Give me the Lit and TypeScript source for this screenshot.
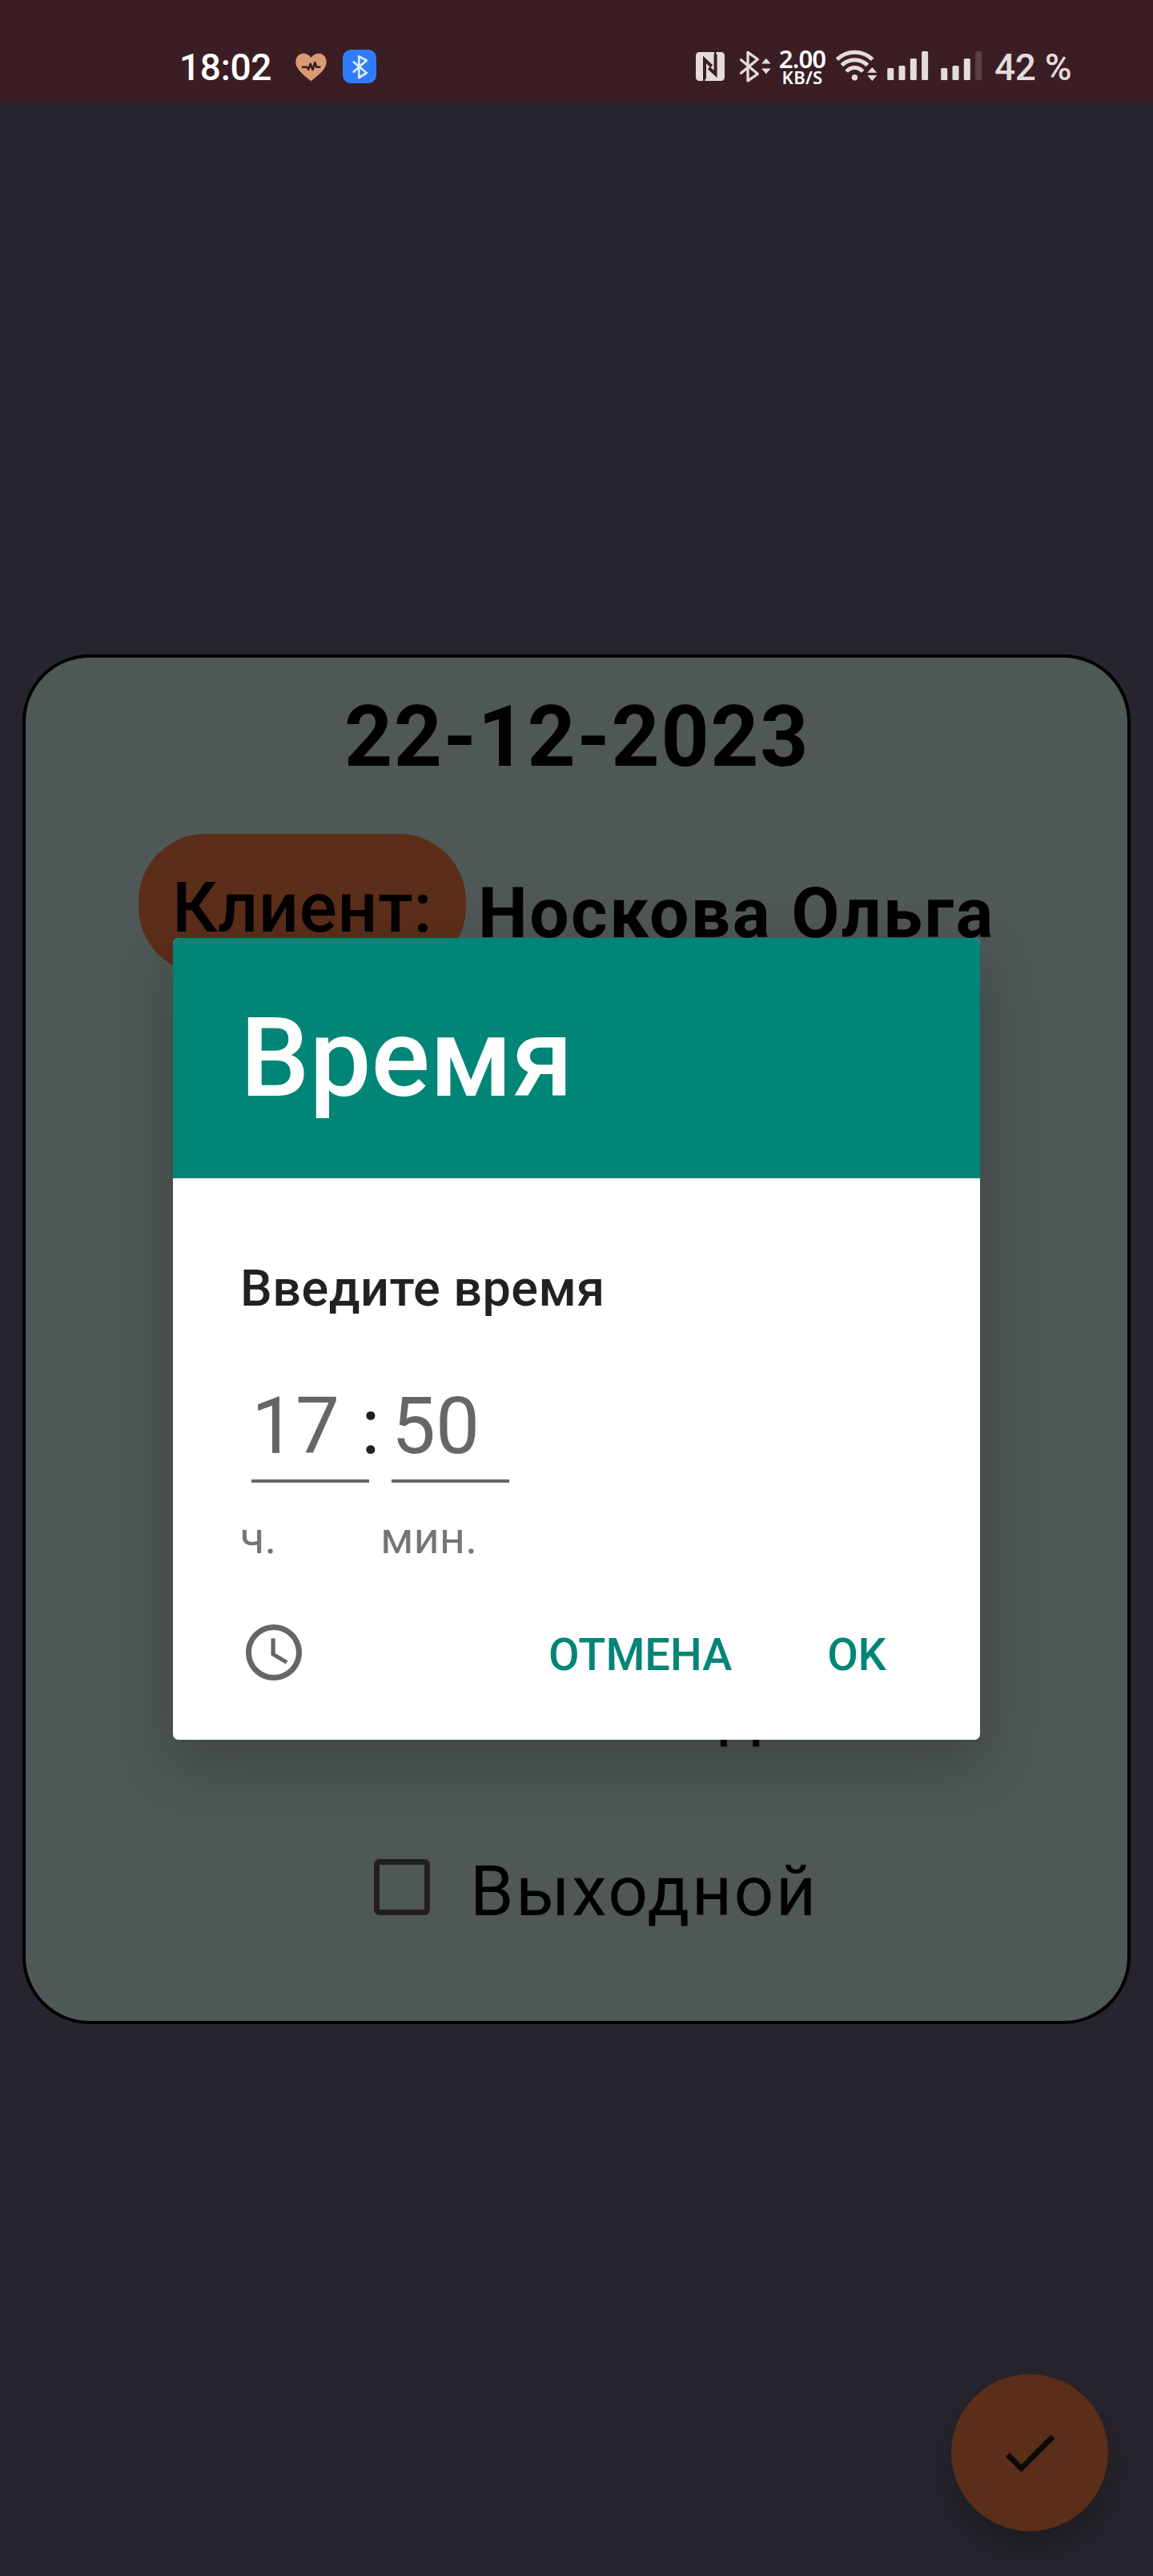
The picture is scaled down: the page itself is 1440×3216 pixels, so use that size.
import { LitElement, html, css, svg } from "lit";
import { customElement, property } from "lit/decorators.js";

/** Icons of the status bar share one 60px tall strip, so their boxes align in the row. */
@customElement("status-bar")
export class StatusBar extends LitElement {
  static styles = css`
    :host {
      display: flex;
      align-items: center;
      box-sizing: border-box;
      height: 128px;
      padding: 36px 0 0 224px;
      background: #3b1e24;
      color: #e3dbdc;
      font-family: Roboto, sans-serif;
    }
    svg { display: block; flex: none; height: 60px; fill: currentColor; }
    .text {
      padding-top: 4px;
      font-size: 46px;
      font-weight: 500;
      line-height: 60px;
      letter-spacing: -0.3px;
      white-space: nowrap;
      flex: none;
    }
    .clock { width: 117px; color: #fff; }
    .battery { margin-left: 15px; }
    .heart { width: 39px; margin-left: 28px; color: #da9a72; }
    .tile { width: 42px; margin-left: 20px; }
    .nfc { width: 36px; margin-left: 399px; }
    .bt { width: 43px; margin-left: 17px; }
    .wifi { width: 54px; margin-left: 9px; }
    .sim { width: 53px; margin-left: 11px; }
    .sim + .sim { margin-left: 14px; }
    .speed {
      flex: none;
      width: 62px;
      margin-left: 6px;
      color: #fff;
      text-align: center;
      font-family: "Noto Sans", sans-serif;
      font-weight: 600;
      white-space: nowrap;
    }
    .rate { font-size: 31px; line-height: 28px; letter-spacing: -0.8px; }
    .unit { font-size: 22px; line-height: 19px; letter-spacing: 0.3px; }
    .line { fill: none; stroke: currentColor; stroke-linejoin: round; stroke-linecap: round; }
    .cut { fill: none; stroke: #3b1e24; }
    .faded { opacity: 0.18; }
  `;

  private bars(x: number, active: number) {
    const heights = [15, 18, 27, 36];
    return heights.map(
      (h, i) => svg`<rect class=${i < active ? "" : "faded"} x=${x + i * 14.3} y=${100 - h} width="8" height=${h} rx="1.5"/>`
    );
  }

  render() {
    return html`
      <div class="text clock">18:02</div>
      <svg class="heart" viewBox="369 52 39 60">
        <path d="M388.5 101.2C383.5 96.500 369.300 88 369.300 77C369.300 71 373.500 66.700 379 66.700C383 66.700 386.500 69 388.500 72C390.500 69 394 66.700 398 66.700C403.500 66.700 407.700 71 407.700 77C407.700 88 393.500 96.500 388.500 101.200Z"/>
        <path class="cut" stroke-width="2.6" stroke-linecap="round" stroke-linejoin="round" d="M378 83.700H383L385.300 86.500L387.700 79.800L390.600 87L393.300 78L395.300 83.700H399.300"/>
      </svg>
      <svg class="tile" viewBox="428 52 42 60">
        <rect x="428" y="62" width="42" height="42" rx="10" fill="#2f7cfd"/>
        <path fill="none" stroke="#dfe9ff" stroke-width="2.800" stroke-linejoin="round" stroke-linecap="round" d="M441.800 77.500L457.800 91L448.300 97V70.500L457.800 75.500L441.800 89.500"/>
      </svg>
      <svg class="nfc" viewBox="869 52 36 60">
        <rect x="869" y="65" width="36" height="36" rx="4.500"/>
        <path class="cut" stroke-width="4" d="M880 98.500V74.500L888.800 82.800M893.600 68V92.500L885.200 84.800"/>
        <path class="cut" stroke-width="2.500" d="M879.300 98V102M893.200 64V70"/>
      </svg>
      <svg class="bt" viewBox="922 52 43 60">
        <path class="line" stroke-width="3.300" d="M925.500 74.800L946.300 92.300L934 100.800V65.300L946.300 74L925.500 91.300"/>
        <path d="M951 79.500L956.800 72.800L962.700 79.500ZM951 85.500H962.700L956.800 92.300Z"/>
      </svg>
      <div class="speed">
        <div class="rate">2.00</div>
        <div class="unit">KB/S</div>
      </div>
      <svg class="wifi" viewBox="1042 52 54 60">
        <g fill="none" stroke="currentColor" stroke-width="5">
          <path d="M1045.300 74.300A32 32 0 0 1 1089.700 74.300"/>
          <path d="M1051.300 81.500A22.300 22.300 0 0 1 1083.400 81.500"/>
          <path d="M1057.200 89.300A13 13 0 0 1 1077.500 89.300"/>
        </g>
        <circle cx="1067.400" cy="96.700" r="3.700"/>
        <path d="M1083.300 90.700L1089.300 84L1095.300 90.700ZM1083.300 94H1095.300L1089.300 101Z"/>
      </svg>
      <svg class="sim" viewBox="1107 52 53 60">${this.bars(1108.2, 4)}</svg>
      <svg class="sim" viewBox="1174 52 53 60">${this.bars(1175.2, 3)}</svg>
      <div class="text battery">42 %</div>
    `;
  }
}

@customElement("appointment-card")
export class AppointmentCard extends LitElement {
  @property() date = "";
  @property() client = "";

  static styles = css`
    :host {
      display: block;
      box-sizing: border-box;
      height: 1710px;
      padding-top: 38px;
      border: 4px solid #000;
      border-radius: 84px;
      background: #4f5856;
      color: #000;
      font-family: Roboto, sans-serif;
      font-size: 87.5px;
      line-height: 120px;
      white-space: nowrap;
    }
    .date {
      padding-left: 1px;
      text-align: center;
      font-size: 105px;
      font-weight: 700;
      line-height: 124px;
      letter-spacing: 1.64px;
    }
    .client { display: flex; align-items: flex-start; gap: 15px; margin: 58px 0 0 141px; }
    .chip {
      box-sizing: border-box;
      width: 409px;
      height: 175px;
      padding: 32px 0 0 42px;
      border-radius: 84px;
      background: #5b2e19;
      font-weight: 500;
      letter-spacing: 0.8px;
    }
    .name { padding-top: 39px; font-weight: 700; letter-spacing: 2.47px; }
    .note { margin: 861px 0 0 866px; }
    .dayoff { display: flex; gap: 50px; margin: 104px 0 0 435px; letter-spacing: 2.4px; }
    .box {
      box-sizing: border-box;
      width: 70px;
      height: 70px;
      margin-top: 20px;
      border: 7px solid #231d1c;
      border-radius: 7px;
    }
  `;

  render() {
    return html`
      <div class="date">${this.date}</div>
      <div class="client">
        <div class="chip">Клиент:</div>
        <div class="name">${this.client}</div>
      </div>
      <div class="note">д</div>
      <div class="dayoff"><span class="box"></span><span>Выходной</span></div>
    `;
  }
}

@customElement("time-dialog")
export class TimeDialog extends LitElement {
  @property() hour = "";
  @property() minute = "";

  static styles = css`
    :host {
      display: block;
      box-sizing: border-box;
      overflow: hidden;
      border-radius: 7px;
      background: #fff;
      box-shadow: 0 28px 72px rgba(0, 0, 0, 0.24);
      font-family: Roboto, sans-serif;
      white-space: nowrap;
    }
    .header {
      box-sizing: border-box;
      height: 300px;
      padding: 70px 84px 0;
      background: #008577;
      color: #fff;
      font-size: 137px;
      font-weight: 500;
      line-height: 160px;
    }
    .body { padding: 100px 0 0 84px; }
    .title { color: #212121; font-size: 63px; font-weight: 500; line-height: 76px; letter-spacing: 0.47px; }
    .time { display: flex; margin: 74px 0 0 14px; color: #666; font-size: 98px; line-height: 120px; }
    .field { box-sizing: border-box; width: 147px; height: 130px; border-bottom: 4px solid #666; }
    .colon { width: 38px; margin-left: -10px; color: #212121; }
    .labels {
      display: grid;
      grid-template-columns: 175px 175px;
      margin-top: 36px;
      color: #757575;
      font-size: 56px;
      line-height: 66px;
    }
    .actions { display: flex; align-items: center; height: 84px; margin-top: 68px; color: #008577; }
    .mode { flex: none; width: 84px; height: 84px; fill: #666; }
    .button { padding-top: 6px; font-size: 56px; font-weight: 500; line-height: 66px; }
    .cancel { margin-left: 301px; }
    .ok { margin-left: 119px; letter-spacing: -0.500px; }
  `;

  render() {
    return html`
      <div class="header">Время</div>
      <div class="body">
        <div class="title">Введите время</div>
        <div class="time">
          <div class="field">${this.hour}</div>
          <div class="colon">:</div>
          <div class="field">${this.minute}</div>
        </div>
        <div class="labels"><span>ч.</span><span>мин.</span></div>
        <div class="actions">
          <svg class="mode" viewBox="0 0 24 24">
            <path d="M11.990 2C6.470 2 2 6.480 2 12s4.470 10 9.990 10C17.520 22 22 17.520 22 12S17.520 2 11.990 2zM12 20c-4.420 0-8-3.580-8-8s3.580-8 8-8 8 3.580 8 8-3.580 8-8 8z"/>
            <path d="M12.500 7H11v6l5.250 3.150.75-1.230-4.500-2.670z"/>
          </svg>
          <div class="button cancel">ОТМЕНА</div>
          <div class="button ok">OK</div>
        </div>
      </div>
    `;
  }
}

@customElement("app-root")
export class AppRoot extends LitElement {
  static styles = css`
    :host { display: block; }
    .screen {
      position: relative;
      box-sizing: border-box;
      height: 3216px;
      overflow: hidden;
      background: #27242d;
    }
    .card { margin: 689px 28px 0; }
    .dialog { position: absolute; left: 216px; top: 1171px; width: 1008px; height: 1001px; }
    .fab {
      position: absolute;
      right: 56px;
      bottom: 56px;
      display: flex;
      align-items: center;
      justify-content: center;
      width: 196px;
      height: 196px;
      border-radius: 50%;
      background: #5b2e19;
      box-shadow: 0 20px 36px rgba(0, 0, 0, 0.24);
    }
    .check { width: 84px; height: 84px; fill: #0d0b0a; }
  `;

  render() {
    return html`
      <div class="screen">
        <status-bar></status-bar>
        <appointment-card class="card" date="22-12-2023" client="Носкова Ольга"></appointment-card>
        <div class="fab">
          <svg class="check" viewBox="0 0 24 24"><path d="M9 16.200L4.800 12l-1.400 1.400L9 19 21 7l-1.400-1.400L9 16.200z"/></svg>
        </div>
        <time-dialog class="dialog" hour="17" minute="50"></time-dialog>
      </div>
    `;
  }
}
